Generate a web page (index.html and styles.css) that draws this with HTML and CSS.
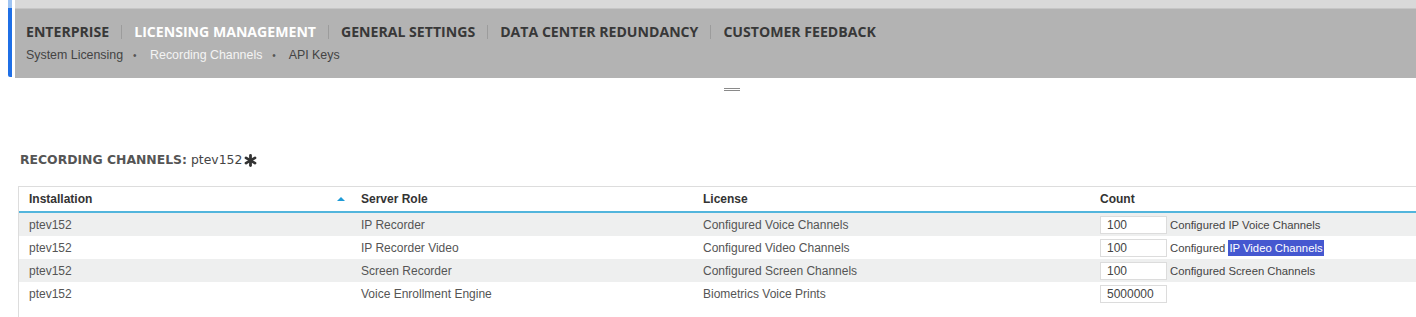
FILE: index.html
```html
<!DOCTYPE html>
<html lang="en">
<head>
    <meta charset="UTF-8">
    <title>Recording Channels</title>
    <link rel="stylesheet" href="styles.css">
</head>
<body>
<div class="topbar">
    <div class="accent"></div>
    <div class="header">
        <div class="strip"></div>
        <div class="nav">
            <div class="tabs">
                <span class="tab">ENTERPRISE</span><span class="sep"></span>
                <span class="tab active">LICENSING MANAGEMENT</span><span class="sep"></span>
                <span class="tab">GENERAL SETTINGS</span><span class="sep"></span>
                <span class="tab">DATA CENTER REDUNDANCY</span><span class="sep"></span>
                <span class="tab">CUSTOMER FEEDBACK</span>
            </div>
            <div class="subtabs">
                <span class="subtab">System Licensing</span><span class="dot">&bull;</span>
                <span class="subtab active">Recording Channels</span><span class="dot">&bull;</span>
                <span class="subtab">API Keys</span>
            </div>
        </div>
    </div>
</div>
<div class="handle"></div>

<div class="content">
    <h2 class="title">RECORDING CHANNELS: <span class="server">ptev152</span>
        <svg class="star" width="13" height="13" viewBox="0 0 13 13">
            <g stroke="#333" stroke-width="2.8" stroke-linecap="round">
                <line x1="6.5" y1="1.4" x2="6.5" y2="11.6"/>
                <line x1="2" y1="3.9" x2="11" y2="9.1"/>
                <line x1="2" y1="9.1" x2="11" y2="3.9"/>
            </g>
        </svg>
    </h2>

    <div class="gridwrap">
        <table class="grid">
            <colgroup>
                <col class="c1"><col class="c2"><col class="c3"><col>
            </colgroup>
            <thead>
            <tr>
                <th>Installation<span class="sort"></span></th>
                <th>Server Role</th>
                <th>License</th>
                <th>Count</th>
            </tr>
            </thead>
            <tbody>
            <tr class="odd">
                <td>ptev152</td>
                <td>IP Recorder</td>
                <td>Configured Voice Channels</td>
                <td><input class="count" value="100"><span class="note">Configured IP Voice Channels</span></td>
            </tr>
            <tr>
                <td>ptev152</td>
                <td>IP Recorder Video</td>
                <td>Configured Video Channels</td>
                <td><input class="count" value="100"><span class="note">Configured <span class="sel">IP Video Channels</span></span></td>
            </tr>
            <tr class="odd">
                <td>ptev152</td>
                <td>Screen Recorder</td>
                <td>Configured Screen Channels</td>
                <td><input class="count" value="100"><span class="note">Configured Screen Channels</span></td>
            </tr>
            <tr>
                <td>ptev152</td>
                <td>Voice Enrollment Engine</td>
                <td>Biometrics Voice Prints</td>
                <td><input class="count" value="5000000"></td>
            </tr>
            </tbody>
        </table>
    </div>
</div>
</body>
</html>
```

FILE: styles.css
```css
body{
    margin: 0;
    font-family: "Liberation Sans", Arial, sans-serif;
    font-size: 12px;
    color: #555;
    overflow: hidden;
}

.topbar{
    display: flex;
    padding-left: 8px;
}
.accent{
    width: 4px;
    height: 77px;
    background: linear-gradient(#9fc4f2 0, #9fc4f2 8px, #1f6fe6 8px);
    border-bottom-left-radius: 2px;
    margin-right: 3px;
}
.header{
    flex: 1;
    background-color: #b3b3b3;
}
.strip{
    height: 8px;
    background-color: #d9d9d9;
    border-bottom: 1px solid #c6c6c6;
}
.nav{
    padding: 13px 11px 14px 11px;
}
.tabs{
    display: flex;
    align-items: center;
    height: 20px;
    font-family: "Open Sans", sans-serif;
    font-weight: 700;
    font-size: 14.1px;
    line-height: 20px;
    color: #383838;
}
.tab.active{
    color: #fff;
}
.sep{
    width: 1px;
    height: 14px;
    background-color: #9c9c9c;
    margin: 0 12px;
}
.subtabs{
    margin-top: 5px;
    line-height: 16px;
    font-size: 12.4px;
    color: #444;
}
.subtab.active{
    color: #f4f4f4;
}
.dot{
    color: #555;
    margin: 0 10px;
    font-size: 10px;
}

.handle{
    width: 16px;
    height: 1px;
    border-top: 1px solid #8a8a8a;
    border-bottom: 1px solid #8a8a8a;
    margin: 10px 0 0 724px;
}

.content{
    padding-left: 18px;
}
.title{
    margin: 61px 0 18px 2px;
    font-family: "DejaVu Sans", sans-serif;
    font-weight: 700;
    font-size: 12.4px;
    line-height: 16px;
    color: #555;
    display: flex;
    align-items: center;
}
.server{
    font-weight: 400;
    color: #444;
    margin-left: 4px;
}
.star{
    margin-left: 2px;
}

.gridwrap{
    border-left: 1px solid #ddd;
    border-top: 1px solid #ddd;
    min-height: 140px;
}
.grid{
    width: 100%;
    table-layout: fixed;
    border-collapse: collapse;
}
.c1{ width: 332px; }
.c2{ width: 342px; }
.c3{ width: 397px; }

.grid th{
    height: 24px;
    padding: 0 10px;
    text-align: left;
    font-weight: 700;
    color: #333;
    border-bottom: 2px solid #52b5dc;
    line-height: 16px;
}
.sort{
    float: right;
    margin: 6px -4px 0 0;
    width: 0;
    height: 0;
    border-left: 4px solid transparent;
    border-right: 4px solid transparent;
    border-bottom: 4px solid #1e9bd7;
}
.grid td{
    height: 23px;
    padding: 0 10px;
    line-height: 16px;
    white-space: nowrap;
}
.grid tr.odd td{
    background-color: #eeefef;
}
.count{
    width: 67px;
    height: 18px;
    box-sizing: border-box;
    border: 1px solid #dcdcdc;
    background: #fff;
    padding: 0 6px;
    font-family: "Liberation Sans", Arial, sans-serif;
    font-size: 12px;
    color: #444;
    vertical-align: middle;
    margin: 0;
}
.note{
    margin-left: 3px;
    font-size: 11.3px;
    color: #444;
    vertical-align: middle;
}
.sel{
    background-color: #4558d0;
    color: #fff;
    padding: 2px 1px;
}
```
